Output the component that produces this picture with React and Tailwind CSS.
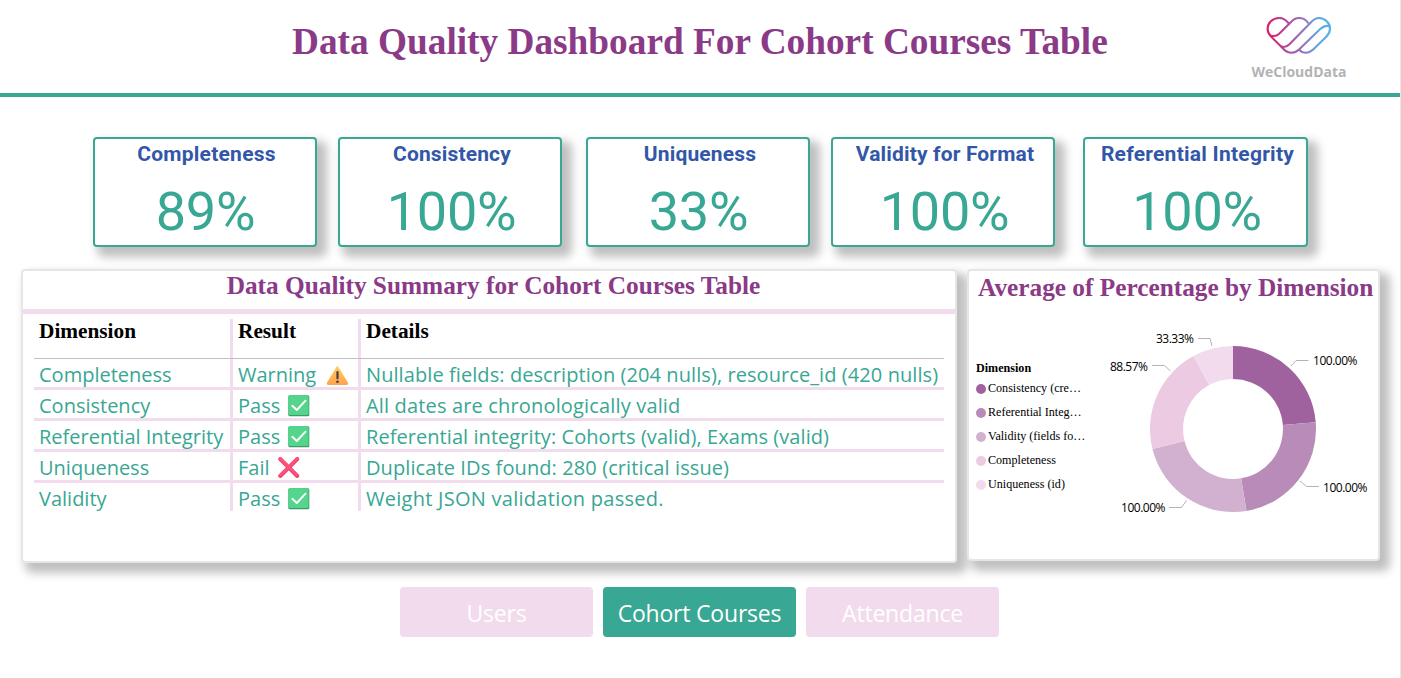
import React from "react";

const cards = [
  { title: "Completeness", value: "89%", box: "w-[224px] ml-[93px]", label: "tracking-[0.25px] pl-[3px]", number: "pl-[1px]" },
  { title: "Consistency", value: "100%", box: "w-[224px] ml-[21px]", label: "tracking-[0.15px] pl-[4px]", number: "pl-[3px]" },
  { title: "Uniqueness", value: "33%", box: "w-[224px] ml-[24px]", label: "tracking-[0.15px] pl-[4px]", number: "pl-[1px]" },
  { title: "Validity for Format", value: "100%", box: "w-[224px] ml-[21px]", label: "tracking-[0.15px] pl-[4px]", number: "pl-[3px]" },
  { title: "Referential Integrity", value: "100%", box: "w-[225px] ml-[28px]", label: "tracking-[0.25px] pl-[4px]", number: "pl-[3px]" },
];

const rows = [
  { dimension: "Completeness", result: "Warning", icon: "warn", tracking: "tracking-[0.08px]", details: "Nullable fields: description (204 nulls), resource_id (420 nulls)" },
  { dimension: "Consistency", result: "Pass", icon: "pass", tracking: "tracking-[0.16px]", details: "All dates are chronologically valid" },
  { dimension: "Referential Integrity", result: "Pass", icon: "pass", tracking: "tracking-[0.06px]", details: "Referential integrity: Cohorts (valid), Exams (valid)" },
  { dimension: "Uniqueness", result: "Fail", icon: "fail", tracking: "tracking-[0.1px]", details: "Duplicate IDs found: 280 (critical issue)" },
  { dimension: "Validity", result: "Pass", icon: "pass", tracking: "tracking-[0.27px]", details: "Weight JSON validation passed." },
];

const legend = [
  { label: "Consistency (cre…", dot: "bg-[#a0629f]" },
  { label: "Referential Integ…", dot: "bg-[#b88bb9]" },
  { label: "Validity (fields fo…", dot: "bg-[#d1b0d0]" },
  { label: "Completeness", dot: "bg-[#eccae2]" },
  { label: "Uniqueness (id)", dot: "bg-[#f2dbec]" },
];

const slices = [
  { value: 100, color: "#a0629f" },
  { value: 100, color: "#b88bb9" },
  { value: 100, color: "#d1b0d0" },
  { value: 88.57, color: "#eccae2" },
  { value: 33.33, color: "#f2dbec" },
];

function Logo() {
  return (
    <svg width="66" height="40" viewBox="0 0 66 40" fill="none" strokeWidth="2.1" stroke="url(#brand)" strokeLinecap="round">
      <defs>
        <linearGradient id="brand" gradientUnits="userSpaceOnUse" x1="0" y1="0" x2="66" y2="0">
          <stop offset="0" stopColor="#e5195f" />
          <stop offset="0.3" stopColor="#b2479b" />
          <stop offset="0.6" stopColor="#8f7cc4" />
          <stop offset="0.8" stopColor="#5fa8e0" />
          <stop offset="1" stopColor="#4fb4ea" />
        </linearGradient>
      </defs>
      <path d="M22.500 7.200C20 3.700 17 2 13 2C6.500 2 1.600 7 1.600 12.800C1.600 15.800 3 18.500 5 20.500L17.500 33C19.500 35.200 22 36.700 25.500 36.700C28.500 36.700 31 35.500 33 33.500L54.500 12.800C57.500 10 60.500 9.200 63.500 10.300" />
      <path d="M5.500 19.700C8.500 20.500 11 19.800 13.200 17.700L25 6C27.300 3.500 29.800 2 32.800 2C36.500 2 40 3.700 42 6.800" />
      <path d="M15.500 30.600C18.500 31.500 21 30.700 23.200 28.500L44.800 6.500C47.300 3.700 49.800 2 53 2C59 2 64 7 64 12.800C64 15.800 62.500 18.500 60.500 20.500L47.500 33.300C45.300 35.400 43 36.700 40 36.700C37.200 36.700 35 35.700 33.500 33.800" />
    </svg>
  );
}

function StatusIcon({ kind }) {
  if (kind === "warn") {
    return (
      <svg className="mt-[5px] ml-[9.500px] shrink-0" width="23" height="22" viewBox="0 0 23 22">
        <defs>
          <linearGradient id="warn" x1="0" y1="0" x2="0" y2="1">
            <stop offset="0" stopColor="#fcd05a" />
            <stop offset="1" stopColor="#ffa34f" />
          </linearGradient>
        </defs>
        <path d="M10.600 2.700Q11.400 1.500 12.200 2.700L22 18.800Q22.500 20.800 20.900 20.900H2Q0.400 20.800 0.900 18.800Z" fill="url(#warn)" />
        <rect x="10.400" y="7" width="2.200" height="8.300" rx="1.100" fill="#4a3b48" />
        <circle cx="11.500" cy="17.800" r="1.300" fill="#4a3b48" />
      </svg>
    );
  }
  if (kind === "pass") {
    return (
      <svg className="mt-[5px] ml-[7.500px] shrink-0" width="22" height="22" viewBox="0 0 22 22">
        <rect x="0.300" y="0.300" width="21" height="21" rx="1.500" fill="#3b9a70" />
        <rect x="0.300" y="0.300" width="20.300" height="19.800" rx="1.500" fill="#55d48c" />
        <path d="M4.300 10.800L8.800 15L17.500 5.700" stroke="#fff" strokeWidth="1.900" fill="none" strokeLinecap="round" strokeLinejoin="round" />
      </svg>
    );
  }
  return (
    <svg className="mt-[5px] ml-[8.500px] shrink-0" width="22" height="22" viewBox="0 0 22 22">
      <path d="M2.200 2L19.300 19M19.300 2L2.200 19" stroke="#f0405f" strokeWidth="3.900" strokeLinecap="round" />
      <path d="M2.200 1.800L19 18.300M19 1.800L2.200 18.300" stroke="#fb5080" strokeWidth="2.700" strokeLinecap="round" />
    </svg>
  );
}

function Donut() {
  const total = slices.reduce((sum, s) => sum + s.value, 0);
  const cx = 133;
  const cy = 113;
  const outer = 83;
  const inner = 50;
  let start = 0;
  const point = (r, a) => `${cx + r * Math.sin(a)} ${cy - r * Math.cos(a)}`;
  return (
    <svg width="280" height="230" viewBox="0 0 280 230" className="font-['Open_Sans',sans-serif]">
      {slices.map((s) => {
        const a = start;
        const b = start + (s.value / total) * Math.PI * 2;
        start = b;
        return (
          <path
            key={s.color}
            d={`M${point(outer, a)}A${outer} ${outer} 0 0 1 ${point(outer, b)}L${point(inner, b)}A${inner} ${inner} 0 0 0 ${point(inner, a)}Z`}
            fill={s.color}
          />
        );
      })}
      <g fill="none" stroke="#b3b3b3" strokeWidth="1">
        <path d="M191 50L196 44.500H208.500" />
        <path d="M200 165L206.500 170.500H219" />
        <path d="M86.500 184.500L81.500 191.500H69" />
        <path d="M70.500 55L64.500 49.500H52" />
        <path d="M112 30L110 22.500H98" />
      </g>
      <g fill="#000" fontSize="12">
        <text x="213" y="49" textLength="44.500">100.00%</text>
        <text x="223" y="176" textLength="44.500">100.00%</text>
        <text x="21" y="196" textLength="44.500">100.00%</text>
        <text x="10" y="55" textLength="38">88.57%</text>
        <text x="56" y="27" textLength="38">33.33%</text>
      </g>
    </svg>
  );
}

const serif = "font-['Liberation_Serif',serif]";
const sans = "font-['Open_Sans',sans-serif]";

export default function App() {
  return (
    <div className={`${sans} flex h-[678px] w-[1401px] flex-col overflow-hidden border-r border-[#e6e6e6] bg-white`}>
      <header className="flex h-[97px] shrink-0 border-b-4 border-[#38a793]">
        <h1 className={`${serif} ml-[292px] w-[818px] pt-[15px] text-[37.3px] leading-[54px] font-bold whitespace-nowrap text-[#8a3a87]`}>
          Data Quality Dashboard For Cohort Courses Table
        </h1>
        <div className="ml-[139px] flex w-[100px] flex-col items-center pt-[16px]">
          <Logo />
          <span className="mt-[6px] text-[14px] leading-5 font-bold whitespace-nowrap text-[#b3b3b3]">WeCloudData</span>
        </div>
      </header>

      <section className="mt-[40px] flex h-[110px] shrink-0">
        {cards.map((c) => (
          <div key={c.title} className={`${c.box} flex shrink-0 flex-col items-center rounded-[4px] border-2 border-[#38a793] bg-white shadow-[7px_7px_10px_3px_rgba(0,0,0,0.25)]`}>
            <div className={`${c.label} pt-[1px] font-[Roboto,sans-serif] text-[21px] leading-7 font-bold whitespace-nowrap text-[#3257a8]`}>{c.title}</div>
            <div className={`${c.number} mt-[11px] font-[Roboto,sans-serif] text-[54px] leading-[66px] tracking-[-0.3px] text-[#38a793]`}>{c.value}</div>
          </div>
        ))}
      </section>

      <section className="mt-[22px] flex shrink-0 items-start pl-[21px]">
        <div className="h-[294px] w-[936px] rounded-[4px] border-2 border-[#e6e6e6] bg-white shadow-[7px_7px_10px_3px_rgba(0,0,0,0.25)]">
          <h2 className={`${serif} h-[43px] border-b-[5px] border-[#f2dbec] pl-[9px] text-center text-[25.3px] leading-[28px] font-bold text-[#8a3a87]`}>
            Data Quality Summary for Cohort Courses Table
          </h2>
          <div className="mt-[5px] ml-[11px] w-[910px]">
            <div className={`${serif} grid h-[40px] grid-cols-[199px_128px_1fr] border-b border-[#c0c0c0] text-[21.3px] leading-[24px] font-bold text-black`}>
              <div className="border-r-[3px] border-[#f2dbec] pl-[5px]">Dimension</div>
              <div className="border-r-[3px] border-[#f2dbec] pl-[5px]">Result</div>
              <div className="pl-[5px]">Details</div>
            </div>
            {rows.map((r) => (
              <div key={r.dimension} className="grid h-[31px] grid-cols-[199px_128px_1fr] grid-rows-[100%] border-b-[3px] border-[#f2dbec] text-[20px] leading-[32px] whitespace-nowrap text-[#38a793] last:h-[28px] last:border-b-0">
                <div className="border-r-[3px] border-[#f2dbec] pl-[5px]">{r.dimension}</div>
                <div className="flex items-start border-r-[3px] border-[#f2dbec] pl-[5px]">
                  <span>{r.result}</span>
                  <StatusIcon kind={r.icon} />
                </div>
                <div className={`${r.tracking} pl-[5px]`}>{r.details}</div>
              </div>
            ))}
          </div>
        </div>

        <div className="ml-[10px] h-[292px] w-[413px] rounded-[4px] border-2 border-[#e6e6e6] bg-white shadow-[7px_7px_10px_3px_rgba(0,0,0,0.25)]">
          <h2 className={`${serif} h-[45px] pl-[9px] text-[25.3px] leading-[32px] font-bold whitespace-nowrap text-[#8a3a87]`}>
            Average of Percentage by Dimension
          </h2>
          <div className="flex">
            <div className={`${serif} w-[131px] pt-[45px] pl-[7px] text-[12.1px] whitespace-nowrap text-black`}>
              <div className="leading-[15px] font-bold">Dimension</div>
              <ul>
                {legend.map((l) => (
                  <li key={l.label} className="flex h-6 items-center gap-[2px]">
                    <span className={`${l.dot} mt-[2px] size-[10px] rounded-full`} />
                    <span>{l.label}</span>
                  </li>
                ))}
              </ul>
            </div>
            <div className="-mr-2 shrink-0">
              <Donut />
            </div>
          </div>
        </div>
      </section>

      <nav className="mt-[24px] ml-[400px] flex gap-[10px] text-[23px] leading-[53px] tracking-[-0.2px] text-white">
        <button className="h-[50px] w-[193px] rounded-[4px] bg-[#f2dbec]">Users</button>
        <button className="h-[50px] w-[193px] rounded-[4px] bg-[#38a793] whitespace-nowrap">Cohort Courses</button>
        <button className="h-[50px] w-[193px] rounded-[4px] bg-[#f2dbec]">Attendance</button>
      </nav>
    </div>
  );
}
